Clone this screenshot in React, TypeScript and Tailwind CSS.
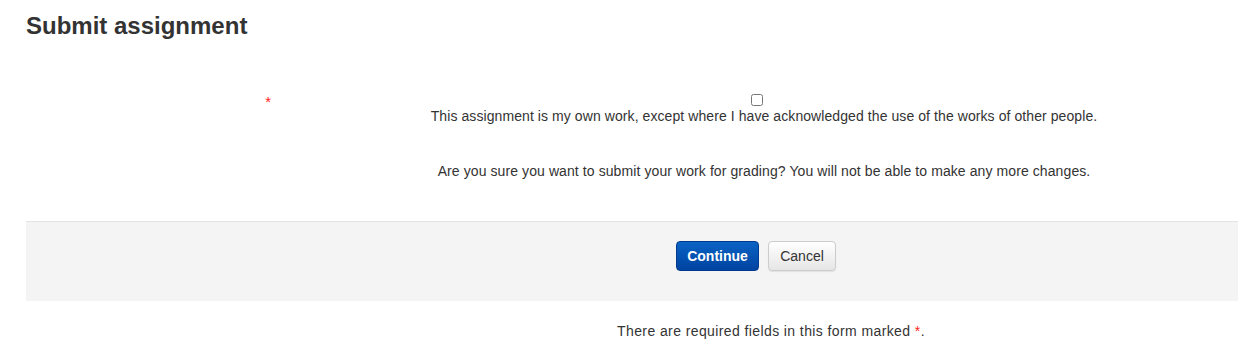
export default function App() {
  return (
    <div className="min-h-[355px] bg-white text-[#333] font-['Liberation_Sans',Arial,sans-serif]">
      <div className="ml-[26px] w-[1212px]">
        <h2 className="pt-[11px] text-[24px] leading-[30px] font-bold text-[#333]">Submit assignment</h2>

        <div className="mt-[52px] flex">
          <div className="w-[264px] flex justify-end pr-[19px] pt-[1px]">
            <span className="text-[15px] leading-[15px] text-[#f22]">*</span>
          </div>
          <div className="flex-1 flex flex-col items-center text-[14px] leading-[20px] tracking-[0.08px]">
            <input type="checkbox" className="m-0 ml-[-14px] h-[12px] w-[12px] mt-[1px] accent-[#666]" />
            <span className="mt-[0px]">
              This assignment is my own work, except where I have acknowledged the use of the works of other people.
            </span>
          </div>
        </div>

        <div className="mt-[35px] flex">
          <div className="w-[264px]" />
          <p className="flex-1 text-center text-[14px] leading-[20px] tracking-[0.09px]">
            Are you sure you want to submit your work for grading? You will not be able to make any more changes.
          </p>
        </div>

        <div className="mt-[40px] h-[80px] border-t border-[#e3e3e3] bg-[#f4f4f4] flex">
          <div className="w-[264px]" />
          <div className="flex-1 flex justify-center pt-[19px] pr-[16px] gap-[9px]">
            <button className="h-[30px] w-[83px] rounded-[4px] border border-[#003a8c] bg-gradient-to-b from-[#0b63c4] to-[#0043a1] text-white text-[14px] font-bold">
              Continue
            </button>
            <button className="h-[30px] w-[68px] rounded-[4px] border border-[#ccc] bg-gradient-to-b from-white to-[#e6e6e6] text-[#333] text-[14px] shadow-[0_1px_1px_rgba(0,0,0,0.08)]">
              Cancel
            </button>
          </div>
        </div>

        <div className="mt-[20px] flex">
          <div className="w-[264px]" />
          <p className="flex-1 text-center text-[14px] leading-[20px] pl-[14px] tracking-[0.4px]">
            There are required fields in this form marked <span className="text-[#f22]">*</span>.
          </p>
        </div>
      </div>
    </div>
  );
}
